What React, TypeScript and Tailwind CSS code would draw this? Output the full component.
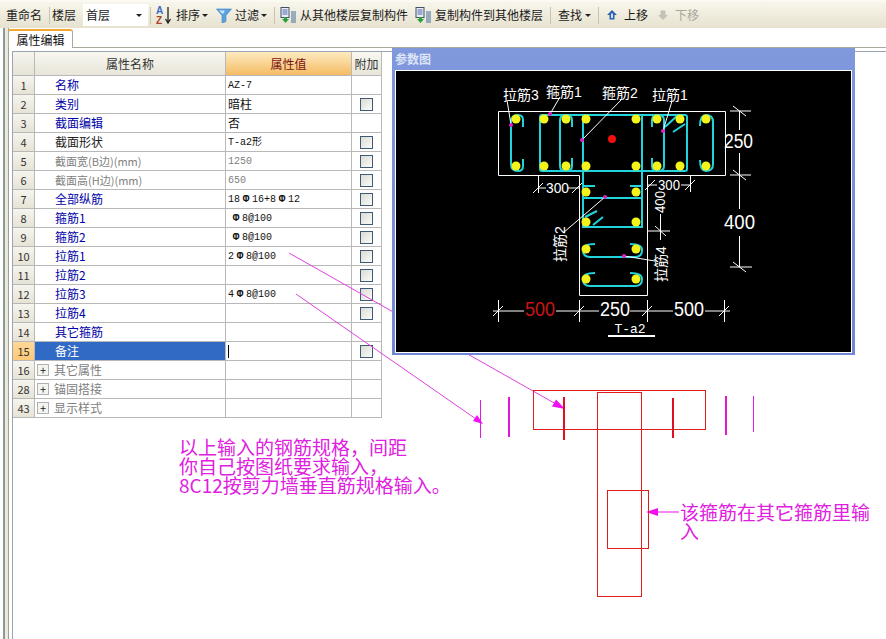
const rows = [
  { n: 1, name: "名称", color: "text-[#0000a8]", value: "AZ-7" },
  { n: 2, name: "类别", color: "text-[#0000a8]", value: "暗柱", check: true },
  { n: 3, name: "截面编辑", color: "text-[#0000a8]", value: "否" },
  { n: 4, name: "截面形状", color: "text-[#222222]", value: "T-a2形", check: true },
  { n: 5, name: "截面宽(B边)(mm)", color: "text-[#808080]", value: "1250", gray: true, check: true },
  { n: 6, name: "截面高(H边)(mm)", color: "text-[#808080]", value: "650", gray: true, check: true },
  { n: 7, name: "全部纵筋", color: "text-[#0000a8]", value: "18Φ16+8Φ12", check: true },
  { n: 8, name: "箍筋1", color: "text-[#0000a8]", value: "Φ8@100", indent: true, check: true },
  { n: 9, name: "箍筋2", color: "text-[#0000a8]", value: "Φ8@100", indent: true, check: true },
  { n: 10, name: "拉筋1", color: "text-[#0000a8]", value: "2Φ8@100", check: true },
  { n: 11, name: "拉筋2", color: "text-[#0000a8]", value: "", check: true },
  { n: 12, name: "拉筋3", color: "text-[#0000a8]", value: "4Φ8@100", check: true },
  { n: 13, name: "拉筋4", color: "text-[#0000a8]", value: "", check: true },
  { n: 14, name: "其它箍筋", color: "text-[#0000a8]", value: "" },
];

const sections = [
  { n: 16, name: "其它属性" },
  { n: 28, name: "锚固搭接" },
  { n: 43, name: "显示样式" },
];

const indexCell =
  "flex h-[19px] w-[22px] shrink-0 items-center justify-center border-r border-b border-[#b8b8b8] bg-gradient-to-b from-[#f6f5ee] to-[#e6e3d6] text-[11px] text-[#333]";
const rowCell = "h-[19px] shrink-0 border-r border-b border-[#b8b8b8] flex items-center";
const latin = "[font-family:'Liberation_Mono','Noto_Sans_CJK_SC',monospace]";

function Caret() {
  return <span className="h-0 w-0 border-x-[3px] border-t-[3px] border-x-transparent border-t-[#222]" />;
}

function Sep({ className = "" }: { className?: string }) {
  return <span className={`h-[17px] w-px shrink-0 bg-[#c8c4b0] ${className}`} />;
}

function CopyIcon({ className = "" }: { className?: string }) {
  return (
    <svg width="17" height="17" viewBox="0 0 17 17" className={`shrink-0 ${className}`}>
      <rect x="1" y="0.5" width="8" height="10" fill="#e8ecf4" stroke="#44506a" />
      <path d="M2.5 3h5M2.5 5h5M2.5 7h5" stroke="#4a6ab0" />
      <path d="M4 10h3v2h2l-3.5 4L2 12h2z" fill="#2f9e3c" />
      <path d="M11 5h5M11 7h5M11 9h5M11 11h5M11 13h5M11 15h5" stroke="#3f6f9f" />
    </svg>
  );
}

function Toolbar() {
  return (
    <div className="flex h-[28px] items-center border-t-2 border-[#faf9f2] bg-gradient-to-b from-[#f8f6ec] to-[#e7e2cf] text-[12px] text-[#1a1a1a]">
      <span className="ml-[6px] w-[37px] shrink-0">重命名</span>
      <Sep className="ml-[6px]" />
      <span className="ml-[2px] w-[24px] shrink-0">楼层</span>
      <span className="ml-[7px] flex h-[22px] w-[65px] shrink-0 items-center justify-between bg-white pl-[3px] pr-[6px]">
        首层
        <Caret />
      </span>
      <Sep className="ml-[2px]" />
      <svg width="17" height="20" viewBox="0 0 17 20" className="ml-[5px] shrink-0">
        <text x="0" y="9" fontSize="10" fontWeight="700" fill="#3c6cc0" className="[font-family:'Liberation_Sans',sans-serif]">A</text>
        <text x="0" y="19" fontSize="10" fontWeight="700" fill="#a8432e" className="[font-family:'Liberation_Sans',sans-serif]">Z</text>
        <path d="M12 2v15M9.5 14l2.5 4 2.5-4" fill="none" stroke="#222" strokeWidth="1.3" />
      </svg>
      <span className="ml-[3px] w-[25px] shrink-0">排序</span>
      <span className="ml-px flex"><Caret /></span>
      <svg width="16" height="15" viewBox="0 0 16 15" className="ml-[8px] shrink-0">
        <path d="M0.5 1h15L10 7.5V13.5L6 15V7.5z" fill="#5aa2e0" stroke="#3f7fc0" strokeWidth="0.6" />
        <path d="M3 2.5h6L7 6z" fill="#cfe8fa" />
      </svg>
      <span className="ml-[3px] w-[25px] shrink-0">过滤</span>
      <span className="ml-px flex"><Caret /></span>
      <Sep className="ml-[7px]" />
      <CopyIcon className="ml-[5px]" />
      <span className="ml-[3px] w-[109px] shrink-0">从其他楼层复制构件</span>
      <CopyIcon className="ml-[6px]" />
      <span className="ml-[3px] w-[108px] shrink-0">复制构件到其他楼层</span>
      <Sep className="ml-[7px]" />
      <span className="ml-[7px] w-[25px] shrink-0">查找</span>
      <span className="ml-[2px] flex"><Caret /></span>
      <Sep className="ml-[7px]" />
      <svg width="10" height="10" viewBox="0 0 10 10" className="ml-[8px] shrink-0">
        <path d="M5 0l5 5H7.5v4.5h-5V5H0z" fill="#2a62b0" />
        <path d="M4 3.5h2V8H4z" fill="#cfe0f6" />
      </svg>
      <span className="ml-[7px] w-[25px] shrink-0">上移</span>
      <svg width="10" height="10" viewBox="0 0 10 10" className="ml-[9px] shrink-0">
        <path d="M5 10L0 5h2.5V0.5h5V5H10z" fill="#c4c2b6" />
      </svg>
      <span className="ml-[7px] w-[25px] shrink-0 text-[#a8a69a]">下移</span>
    </div>
  );
}

function Checkbox() {
  return <span className="h-[13px] w-[13px] border border-[#3d5a78] bg-gradient-to-br from-[#dcdcd4] to-[#fbfbf9]" />;
}

// the bar symbol takes a full-width cell, the digits a half-width one
function RebarValue({ value }: { value: string }) {
  return (
    <>
      {value.split(/(Φ)/).map((part, i) =>
        part === "Φ" ? (
          <span key={i} className="w-[12px] text-center text-[11px] font-bold">Φ</span>
        ) : (
          <span key={i}>{part}</span>
        ),
      )}
    </>
  );
}

function PropertyTable() {
  return (
    <div className="w-[369px] text-[12px]">
      <div className="flex h-[24px]">
        <div className="w-[22px] border-r border-b border-[#b8b8b8] bg-gradient-to-b from-[#f6f5ee] to-[#e6e3d6]" />
        <div className="flex w-[191px] items-center justify-center border-r border-b border-[#b8b8b8] bg-gradient-to-b from-[#f8f7f0] to-[#e8e6da] text-[#333]">
          属性名称
        </div>
        <div className="flex w-[126px] items-center justify-center border-r border-b border-[#b8b8b8] bg-gradient-to-b from-[#fdeabf] to-[#f4bc62] text-[#7a1212]">
          属性值
        </div>
        <div className="flex w-[30px] items-center justify-center border-r border-b border-[#b8b8b8] bg-gradient-to-b from-[#f8f7f0] to-[#e8e6da] text-[#333]">
          附加
        </div>
      </div>
      {rows.map((r) => (
        <div key={r.n} className="flex">
          <div className={indexCell}>{r.n}</div>
          <div className={`${rowCell} w-[191px] pl-[20px] ${r.color} ${r.gray ? "text-[11px]" : ""}`}>{r.name}</div>
          <div
            className={`${rowCell} w-[126px] ${r.indent ? "pl-[4px]" : "pl-[2px]"} ${r.gray ? "text-[#808080]" : "text-[#111]"} ${
              r.n === 2 || r.n === 3 ? "" : `${latin} text-[10px]`
            }`}
          >
            <RebarValue value={r.value} />
          </div>
          <div className={`${rowCell} w-[30px] justify-center`}>{r.check && <Checkbox />}</div>
        </div>
      ))}
      <div className="flex">
        <div className={`${indexCell} !from-[#ffd898] !to-[#fcc878]`}>15</div>
        <div className={`${rowCell} w-[191px] bg-[#316ac5] pl-[20px] text-white`}>备注</div>
        <div className={`${rowCell} w-[126px] pl-[2px]`}>
          <span className="h-[13px] w-px bg-black" />
        </div>
        <div className={`${rowCell} w-[30px] justify-center`}>
          <Checkbox />
        </div>
      </div>
      {sections.map((s) => (
        <div key={s.n} className="flex">
          <div className={indexCell}>{s.n}</div>
          <div className={`${rowCell} w-[191px] pl-[2px] text-[#808080]`}>
            <span className="mr-[5px] flex h-[12px] w-[12px] items-center justify-center border border-[#b0b0b0] bg-[#f4f4f0] text-[11px] leading-none text-[#222]">
              +
            </span>
            {s.name}
          </div>
          <div className={`${rowCell} w-[126px]`} />
          <div className={`${rowCell} w-[30px]`} />
        </div>
      ))}
    </div>
  );
}

const cyan = "#22d3dc";
const dots: [number, number][] = [
  [516, 119], [544, 119], [566, 119], [586, 119], [636, 119], [657, 119], [680, 119], [706, 119],
  [516, 166], [544, 166], [566, 166], [586, 166], [636, 166], [657, 166], [680, 166], [706, 166],
  [586, 192], [636, 192], [586, 222], [636, 222], [586, 249], [636, 249], [586, 279], [636, 279],
];
const pins: [number, number][] = [
  [511, 125], [550, 114], [582, 140], [663, 131], [605, 197], [624, 256],
];

function SectionDrawing() {
  return (
    <svg width="455" height="281" viewBox="396 71 455 281" className="block [font-family:'Liberation_Sans','Noto_Sans_CJK_SC',sans-serif]">
      {/* column outline */}
      <path d="M498.5 111.5H725.5V175.5H647.5V295.5H579.5V175.5H498.5Z" fill="none" stroke="#fff" />
      {/* stirrups */}
      <g fill="none" stroke={cyan} strokeWidth="2">
        <rect x="540" y="115" width="147" height="56" rx="2" />
        <path d="M583 115V227H642V115" />
        <path d="M583 198H642" />
        <path d="M523 127V120Q523 115 518 115Q511 115 511 122V164Q511 171 518 171Q523 171 523 166V159" />
        <path d="M572 127V120Q572 115 566 115Q560 115 560 120V166Q560 171 566 171Q572 171 572 166V158" />
        <path d="M652 127V120Q652 115 658 115Q664 115 664 120V166Q664 171 658 171Q652 171 652 166V158" />
        <path d="M700 126Q700 115 706 115Q713 115 713 122V164Q713 171 706 171Q700 171 700 160" />
        <path d="M665 127L678 115M673 132L685 124" />
        <path d="M583 186H595M630 186H642" />
        <path d="M585 217L597 211M593 225L603 217" />
        <path d="M595 244Q583 244 583 250Q583 257 590 257H635Q642 257 642 250Q642 244 630 244" />
        <path d="M595 273Q583 273 583 279Q583 286 590 286H635Q642 286 642 279Q642 273 630 273" />
      </g>
      {dots.map(([x, y]) => (
        <circle key={`${x}-${y}`} cx={x} cy={y} r="4.5" fill="#f4f41c" />
      ))}
      <circle cx="612" cy="139" r="4" fill="#f01010" />
      {/* leaders */}
      <path
        d="M507 100L511 125M560 97L550 114M622 99L582 140M672 101L663 131M605 197L563 233M624 256L655 261"
        fill="none"
        stroke="#fff"
      />
      {pins.map(([x, y]) => (
        <circle key={`${x}-${y}`} cx={x} cy={y} r="2" fill="#e020c8" />
      ))}
      {/* dimensions */}
      <g fill="none" stroke="#fff">
        <path d="M498.5 300V322M579.5 300V322M647.5 300V322M724.5 300V322" />
        <path d="M493 311H524M556 311H599M630 311H673M705 311H730" />
        <path d="M493 316L503 306M574 316L584 306M642 316L652 306M719 316L729 306" />
        <path d="M730 111H751M739.5 111V130M739.5 153V209M739.5 236V267M730 175H751M730 267H752" />
        <path d="M733 106L746 116M733 170L746 180M733 262L746 272" />
        <path d="M538.5 175V193M538 188H546M568 188H579M533 193L543 183M572 193L582 183" />
        <path d="M690.5 175V192M681 185H690M647 185H657M685 190L695 180M645 190L655 180" />
        <path d="M660.5 214V240M647 231H670M655 226L666 236" />
      </g>
      <g fill="#fff" fontSize="14">
        <text x="503" y="100">拉筋3</text>
        <text x="546" y="97">箍筋1</text>
        <text x="602" y="98">箍筋2</text>
        <text x="652" y="100">拉筋1</text>
        <text x="0" y="0" transform="translate(565 262) rotate(-90)">拉筋2</text>
        <text x="0" y="0" transform="translate(666 282) rotate(-90)">拉筋4</text>
        <text x="546" y="193" textLength="23" lengthAdjust="spacingAndGlyphs">300</text>
        <text x="658" y="190" textLength="22" lengthAdjust="spacingAndGlyphs">300</text>
        <text x="0" y="0" transform="translate(665 213) rotate(-90)" textLength="22" lengthAdjust="spacingAndGlyphs">400</text>
      </g>
      <g fill="#fff" fontSize="20">
        <text x="724" y="148" textLength="29" lengthAdjust="spacingAndGlyphs">250</text>
        <text x="724" y="229" textLength="31" lengthAdjust="spacingAndGlyphs">400</text>
        <text x="600" y="316" textLength="30" lengthAdjust="spacingAndGlyphs">250</text>
        <text x="674" y="316" textLength="30" lengthAdjust="spacingAndGlyphs">500</text>
        <text x="525" y="316" textLength="30" lengthAdjust="spacingAndGlyphs" fill="#c81414">500</text>
      </g>
      <text x="630" y="333" fill="#fff" fontSize="13" textAnchor="middle" className={latin}>T-a2</text>
      <rect x="608" y="335" width="47" height="2" fill="#fff" />
    </svg>
  );
}

function Annotations() {
  return (
    <svg width="886" height="639" viewBox="0 0 886 639" className="absolute inset-0">
      <g fill="none" stroke="#e040e0">
        <path d="M289 253L556 404M296 294L476 419" />
        <path d="M650 512H679" stroke="#f010f0" strokeWidth="1" />
      </g>
      <path d="M565 409L552 406.5L556 399.5Z M483 424L473 421L477 415Z M646 512L658 508V516Z" fill="#f010f0" />
      <g fill="none" stroke="#e01c1c">
        <rect x="533.5" y="390.5" width="172" height="39" />
        <rect x="597.5" y="392.5" width="44" height="204" />
        <rect x="607.5" y="490.5" width="41" height="58" />
      </g>
      <path d="M480.5 400V438M753.5 396V432" stroke="#e018e0" />
      <path d="M509 397V437M726 396V435" stroke="#e018d0" strokeWidth="2" />
      <path d="M564 397V440M673 398V438" stroke="#e01020" strokeWidth="2" />
    </svg>
  );
}

export default function App() {
  return (
    <div className="relative h-[639px] w-[886px] overflow-hidden bg-white [font-family:'Noto_Sans_CJK_SC',sans-serif]">
      <Toolbar />
      <div className="flex h-[611px] pl-[3px]">
        {/* left splitter */}
        <div className="w-[6px] shrink-0 border-x-2 border-r border-l-[#8a9aa0] border-r-[#a0a098] bg-[#ece9d8]" />
        <div className="flex flex-1 flex-col">
          <div className="flex h-[20px] items-end">
            <div className="-ml-px flex h-[19px] w-[65px] items-center justify-center rounded-t-[3px] border-x border-t-2 border-[#a8a89c] border-t-[#f0a830] bg-white text-[12px] text-[#111]">
              属性编辑
            </div>
            <div className="h-px flex-1 bg-[#a8a89c]" />
          </div>
          <div className="ml-[3px] mt-[3px] flex-1 border-t border-l border-[#9aa4b4]">
            <PropertyTable />
          </div>
        </div>
      </div>
      <Annotations />

      {/* floating parameter window */}
      <div className="absolute top-[48px] left-[392px] flex h-[307px] w-[463px] flex-col bg-gradient-to-b from-[#8098dc] to-[#6f88d4] px-[3px] pb-[3px]">
        <div className="flex h-[22px] shrink-0 items-center text-[12px] font-bold text-[#dde4f6]">参数图</div>
        <div className="border border-white bg-black">
          <SectionDrawing />
        </div>
      </div>

      <div className="absolute top-[437px] left-[179px] w-[300px] text-[19px] leading-[19px] text-[#e020e0]">
        <p>以上输入的钢筋规格，间距</p>
        <p>你自己按图纸要求输入，</p>
        <p>8C12按剪力墙垂直筋规格输入。</p>
      </div>
      <p className="absolute top-[502px] left-[680px] w-[192px] text-[19px] leading-[19px] text-[#e020e0]">
        该箍筋在其它箍筋里输入
      </p>
    </div>
  );
}
